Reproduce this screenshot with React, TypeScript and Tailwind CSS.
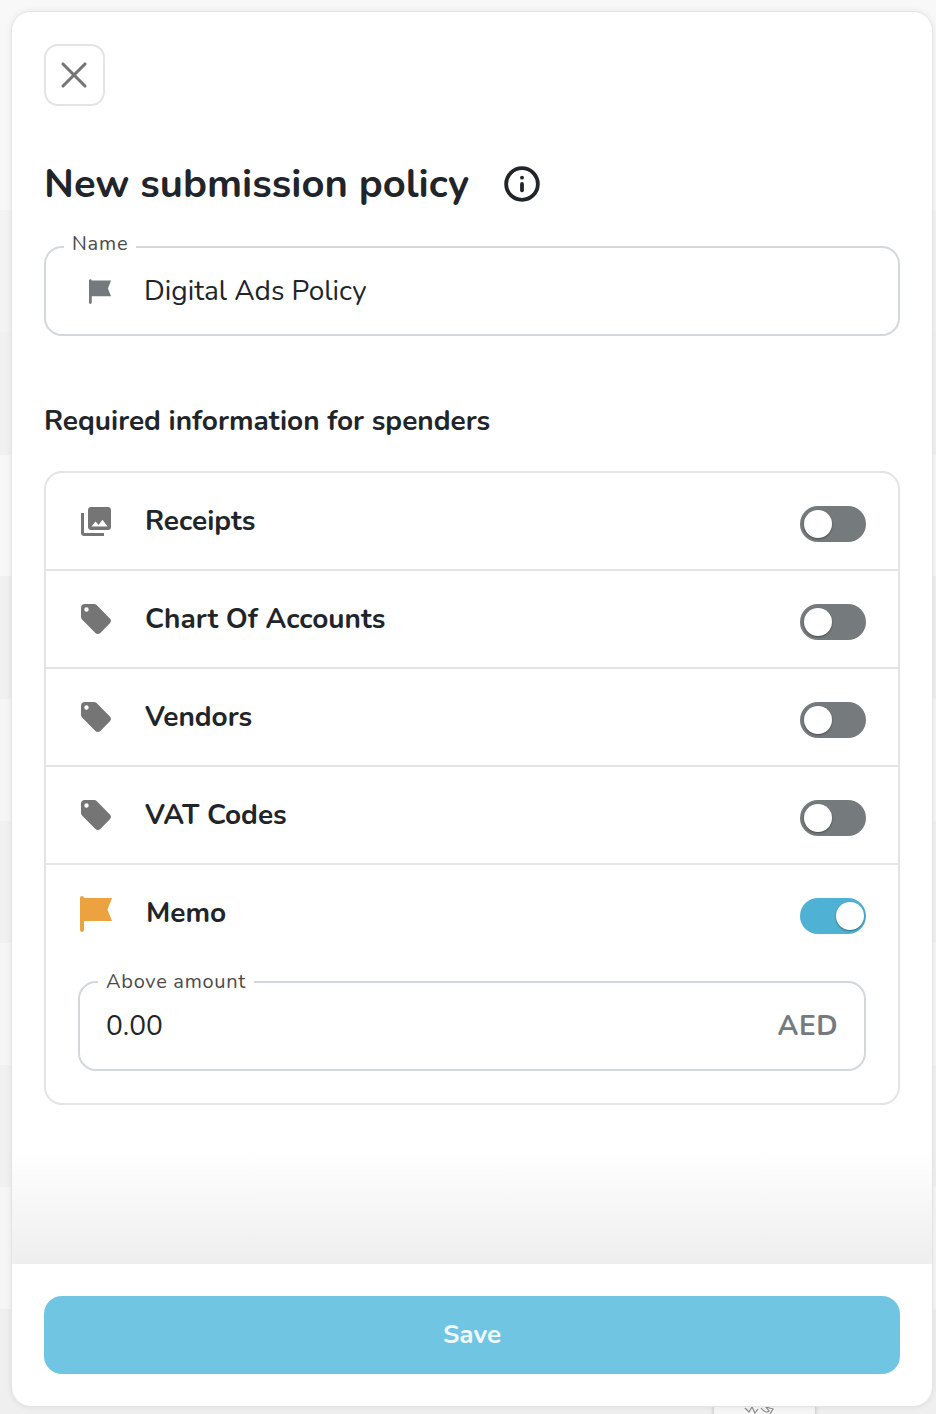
import { Info, X } from 'lucide-react';

const bands = [
  { h: 'h-[210px]', bg: 'bg-[#f8f8f8]' },
  { h: 'h-[122px]', bg: 'bg-[#f3f3f3]' },
  { h: 'h-[123px]', bg: 'bg-[#f1f1f1]' },
  { h: 'h-[121px]', bg: 'bg-[#f7f7f7]' },
  { h: 'h-[123px]', bg: 'bg-[#f0f0f0]' },
  { h: 'h-[122px]', bg: 'bg-[#f6f6f6]' },
  { h: 'h-[122px]', bg: 'bg-[#f1f1f1]' },
  { h: 'h-[122px]', bg: 'bg-[#f6f6f6]' },
  { h: 'h-[122px]', bg: 'bg-[#f1f1f1]' },
  { h: 'h-[122px]', bg: 'bg-[#f6f6f6]' },
  { h: 'h-[227px]', bg: 'bg-[#efefef]' },
];

function Flag({ className }: { className?: string }) {
  return (
    <svg className={className} viewBox="0 0 32 36" fill="currentColor">
      <path d="M0 2C0 .9.9 0 2 0s2 .9 2 2h28l-4.500 11.500L32 25H4v9c0 1.100-.9 2-2 2s-2-.9-2-2V2z" />
    </svg>
  );
}

function Tag() {
  return (
    <svg className="h-[30px] w-[30px] text-[#757575]" viewBox="0 0 30 30" fill="currentColor">
      <path
        fillRule="evenodd"
        d="M3.500 0h9.600c1 0 1.800.4 2.500 1l13.300 13.400c1.400 1.400 1.400 3.500 0 4.900L19.300 28.900c-1.400 1.400-3.500 1.400-4.900 0L1 15.500C.4 14.800 0 14 0 13V3.500C0 1.600 1.600 0 3.500 0zM5.500 3.300a2.200 2.200 0 1 0 0 4.400 2.200 2.200 0 0 0 0-4.400z"
      />
    </svg>
  );
}

function Photos() {
  return (
    <svg className="h-[30px] w-[30px] text-[#757575]" viewBox="0 0 30 30" fill="currentColor">
      <path
        fillRule="evenodd"
        d="M10 1h17c1.700 0 3 1.300 3 3v17c0 1.700-1.300 3-3 3H10c-1.700 0-3-1.300-3-3V4c0-1.700 1.300-3 3-3zM10.500 20.500h16l-5-6.800-4 5.200-2.900-3.500-4.100 5.100z"
      />
      <path d="M0 7h3v20h20v3H3c-1.700 0-3-1.300-3-3V7z" />
    </svg>
  );
}

function Toggle({ on }: { on?: boolean }) {
  return (
    <div className={`flex h-9 w-[66px] items-center rounded-full ${on ? 'mt-[4px] justify-end bg-[#4fb1d4] pr-[2px]' : 'mt-[6px] bg-[#757a7d] pl-1'}`}>
      <div className="h-7 w-7 rounded-full bg-white shadow-[0_1px_2px_rgba(0,0,0,0.4)]" />
    </div>
  );
}

const rows = [
  { label: 'Receipts', icon: <Photos /> },
  { label: 'Chart Of Accounts', icon: <Tag /> },
  { label: 'Vendors', icon: <Tag /> },
  { label: 'VAT Codes', icon: <Tag /> },
];

export default function App() {
  return (
    <div className="relative h-[1414px] overflow-hidden font-['Nunito','Noto_Sans',sans-serif]">
      {/* page behind the modal */}
      {bands.map((b, i) => (
        <div key={i} className={`${b.h} ${b.bg}`} />
      ))}
      <div className="absolute left-[714px] top-[1400px] h-[20px] w-[101px] bg-[#f6f6f6] shadow-[0_0_4px_rgba(0,0,0,0.25)]">
        <svg className="ml-[30px] mt-[5px] h-[10px] w-[32px] text-[#8a8a8a]" viewBox="0 0 32 10" fill="none" stroke="currentColor" strokeWidth="1.2">
          <path d="M1 3l4 4 3-5 3 6 3-4M17 3c3 4 6 5 8 3l-3-4 7 2-3 5" />
        </svg>
      </div>

      <div className="absolute left-[11px] top-[11px] flex h-[1396px] w-[922px] flex-col overflow-hidden rounded-[20px] border border-[#e4e4e4] bg-white shadow-[0_0_6px_rgba(0,0,0,0.08)]">
        <div className="flex-1 bg-gradient-to-b from-white from-[91%] to-[#eeeeee] px-[32px] pt-[32px]">
          <button className="flex h-[62px] w-[61px] items-center justify-center rounded-[14px] border-2 border-[#e2e4e6] pr-[2px] text-[#757575]">
            <X size={44} strokeWidth={1.7} />
          </button>

          <div className="mt-[51px] flex items-center">
            <h1 className="text-[40px] font-bold leading-[54px] text-[#212529]">New submission policy</h1>
            <Info size={38} strokeWidth={2.4} className="ml-[34px] text-[#212529]" />
          </div>

          <fieldset className="mt-[23px] h-[102px] w-[856px] rounded-[18px] border-2 border-[#d3d8dc]">
            <legend className="ml-[18px] px-2 pb-[6px] text-[20px] leading-[20px] tracking-[0.8px] text-[#4a4a4a]">Name</legend>
            <div className="flex h-[62px] items-center pl-[43px]">
              <Flag className="h-[25px] w-[22px] text-[#74797d]" />
              <span className="ml-[33px] text-[28px] text-[#212529]">Digital Ads Policy</span>
            </div>
          </fieldset>

          <h2 className="mt-[65px] text-[28px] font-bold leading-[40px] text-[#212529]">Required information for spenders</h2>

          <div className="mt-[30px] w-[856px] rounded-[18px] border-2 border-[#e2e4e6]">
            {rows.map((r) => (
              <div key={r.label} className="flex h-[98px] items-center border-b-2 border-[#e2e4e6] pl-[35px] pr-[32px]">
                {r.icon}
                <span className="ml-[34px] flex-1 text-[28px] font-bold text-[#212529]">{r.label}</span>
                <Toggle />
              </div>
            ))}
            <div className="px-[32px] pb-[32px]">
              <div className="mb-[9px] flex h-[98px] items-center">
                <Flag className="ml-[2px] h-9 w-[32px] text-[#eda240]" />
                <span className="ml-[34px] flex-1 pb-[2px] text-[28px] font-bold text-[#212529]">Memo</span>
                <Toggle on />
              </div>
              <fieldset className="h-[99px] rounded-[18px] border-2 border-[#d3d8dc]">
                <legend className="ml-[18px] px-2 text-[20px] leading-[20px] tracking-[0.7px] text-[#4a4a4a]">Above amount</legend>
                <div className="flex h-[68px] items-center justify-between px-[26px]">
                  <span className="text-[28px] text-[#212529]">0.00</span>
                  <span className="text-[28px] font-bold tracking-[0.5px] text-[#757a7d]">AED</span>
                </div>
              </fieldset>
            </div>
          </div>
        </div>

        <div className="px-[32px] py-[32px]">
          <button className="h-[78px] w-full rounded-[18px] bg-[#70c6e2] pb-[2px] text-[26px] font-bold text-white/90">Save</button>
        </div>
      </div>
    </div>
  );
}
